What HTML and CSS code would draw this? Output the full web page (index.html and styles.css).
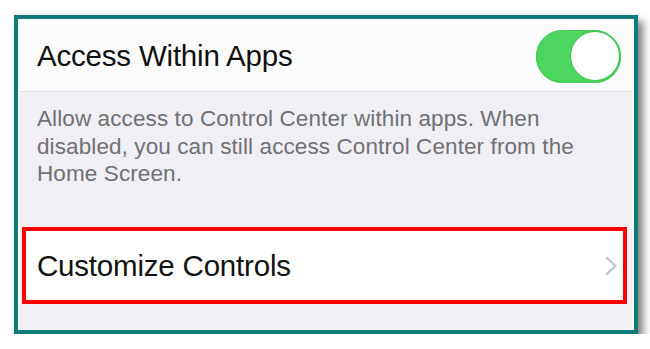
FILE: index.html
```html
<!DOCTYPE html>
<html>
<head>
<meta charset="utf-8">
<link rel="stylesheet" href="styles.css">
</head>
<body>
<div class="frame">
  <div class="inner">
    <div class="row row-top">
      <span class="title">Access Within Apps</span>
      <div class="toggle"><div class="knob"></div></div>
    </div>
    <div class="desc">
      <p>Allow access to Control Center within apps. When disabled, you can still access Control Center from the Home Screen.</p>
    </div>
    <div class="row row-link">
      <span class="title">Customize Controls</span>
      <svg class="chev" width="13" height="20" viewBox="0 0 13 20"><polyline points="2,2 10.5,10 2,18" fill="none" stroke="#c4c4c9" stroke-width="2.4" stroke-linecap="round" stroke-linejoin="round"/></svg>
    </div>
    <div class="bottom"></div>
  </div>
</div>
</body>
</html>
```
FILE: styles.css
```css
html, body {
  margin: 0;
  padding: 0;
  background: #ffffff;
}
body {
  font-family: "Liberation Sans", Arial, sans-serif;
  padding: 15px 0 0 14px;
}
.frame {
  width: 612px;
  height: 308px;
  border: 4px solid #0f7c79;
  background: #fafafc;
  padding: 2px 2px 1px 2px;
  box-shadow: 5px 6px 8px rgba(0, 0, 0, 0.5);
}
.inner {
  height: 100%;
  display: flex;
  flex-direction: column;
  background: #efeff4;
}
.row {
  display: flex;
  align-items: center;
  justify-content: space-between;
  background: #ffffff;
}
.title {
  font-size: 29.5px;
  color: #111111;
  letter-spacing: -0.2px;
}
.row-top {
  height: 70px;
  padding: 0 11px 0 17px;
  border-bottom: 1px solid #dcdce0;
  background: #fcfcfd;
}
.toggle {
  width: 85px;
  height: 53px;
  border-radius: 27px;
  background: #4cd660;
  box-shadow: inset 0 0 0 1px #44c857;
  display: flex;
  justify-content: flex-end;
  align-items: center;
  padding: 0 2px;
  box-sizing: border-box;
}
.knob {
  width: 48px;
  height: 48px;
  border-radius: 50%;
  background: #ffffff;
  box-shadow: 0 0 0 1px #3fc353;
}
.desc {
  height: 133px;
  padding: 13px 34px 0 17px;
  box-sizing: border-box;
}
.desc p {
  margin: 0;
  font-size: 22.5px;
  line-height: 27.5px;
  color: #707075;
  letter-spacing: 0.1px;
}
.row-link {
  height: 77px;
  margin: 2px 5px 0 2px;
  border: 4px solid #ff0000;
  box-sizing: border-box;
  padding: 0 5px 0 11px;
}
.chev {
  display: block;
}
.bottom {
  flex: 1;
}
```
